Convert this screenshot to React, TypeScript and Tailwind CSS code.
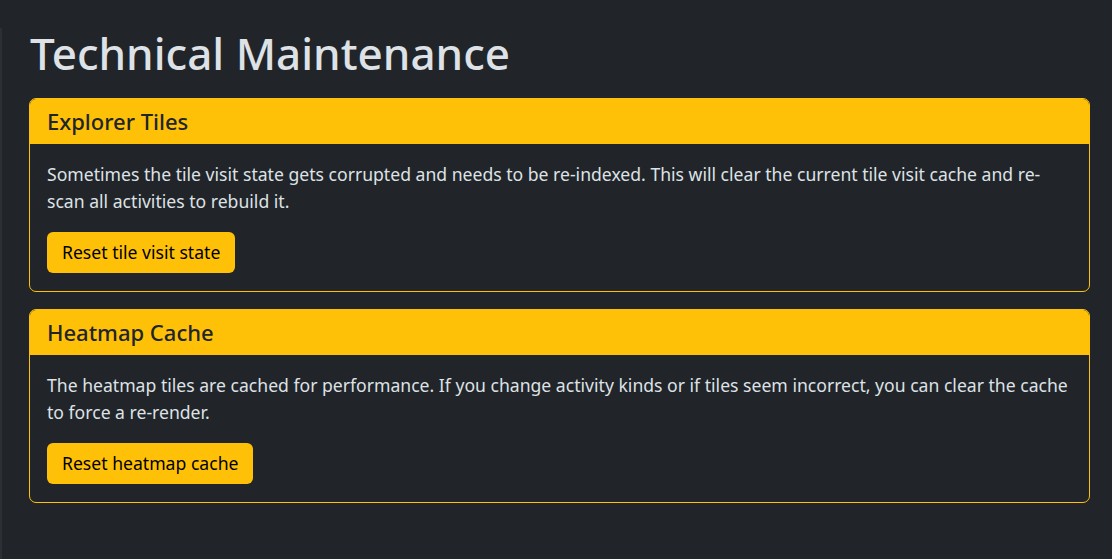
const cards = [
  {
    title: 'Explorer Tiles',
    text: 'Sometimes the tile visit state gets corrupted and needs to be re-indexed. This will clear the current tile visit cache and re-scan all activities to rebuild it.',
    button: 'Reset tile visit state',
  },
  {
    title: 'Heatmap Cache',
    text: 'The heatmap tiles are cached for performance. If you change activity kinds or if tiles seem incorrect, you can clear the cache to force a re-render.',
    button: 'Reset heatmap cache',
  },
];

function MaintenanceCard({ title, text, button }: { title: string; text: string; button: string }) {
  return (
    <div className="mb-[17px] rounded-[7px] border border-[#ffc107]">
      <div className="rounded-t-[6px] bg-[#ffc107] px-[17px] py-[9px] text-[22px] font-medium leading-[27px] text-[#212529]">
        {title}
      </div>
      <div className="px-[17px] pt-[17px] pb-[18px]">
        <p className="mb-[17px] text-[17.6px] leading-[27px] text-[#dee2e6]">{text}</p>
        <button className="rounded-[6px] bg-[#ffc107] px-[15px] py-[7px] text-[17.6px] leading-[27px] text-black">
          {button}
        </button>
      </div>
    </div>
  );
}

export default function App() {
  return (
    <div
      className="flex min-h-[559px] bg-[#212529]"
      style={{ fontFamily: '"Noto Sans", sans-serif' }}
    >
      {/* sidebar edge */}
      <div className="mt-[28px] w-[2px] shrink-0 bg-[#2b3035]" />
      <div className="flex-1 pl-[27px] pr-[22px] pt-[26px]">
        <h1 className="mb-[18px] ml-[1px] text-[44px] font-medium leading-[54px] text-[#dee2e6]">Technical Maintenance</h1>
        {cards.map((c) => (
          <MaintenanceCard key={c.title} {...c} />
        ))}
      </div>
    </div>
  );
}
